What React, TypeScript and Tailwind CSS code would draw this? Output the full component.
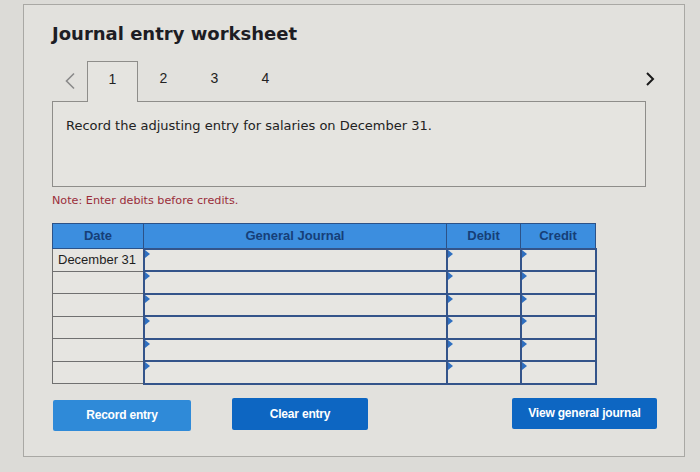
import React from 'react';

const verdana = { fontFamily: '"DejaVu Sans", Verdana, sans-serif' };
const arial = { fontFamily: '"Liberation Sans", Arial, sans-serif' };

const ROWS = ['December 31', '', '', '', '', ''];

function Marker() {
  // little blue arrow in the top-left corner of each input cell
  return (
    <span className="absolute left-0 top-0 h-0 w-0 border-y-[4px] border-l-[5px] border-y-transparent border-l-[#2f6fc0]" />
  );
}

export default function App() {
  return (
    <div className="w-[700px] h-[472px] bg-[#dcdbd7] pt-[4px] pl-[23px] overflow-hidden" style={arial}>
      <div className="w-[662px] h-[453px] border border-[#a9a8a4] bg-[#e2e1dd] px-[28px] pt-[18px]">
        <h1 className="text-[18px] font-bold leading-[22px] text-[#1d1d24]" style={verdana}>
          Journal entry worksheet
        </h1>

        {/* tabs */}
        <div className="mt-[16px] flex h-[40px] w-[605px]">
          <button className="flex w-[35px] items-center justify-center text-[#8a8a8a]">
            <svg width="12" height="18" viewBox="0 0 12 18" fill="none">
              <path d="M10 1.5 2.5 9l7.5 7.5" stroke="currentColor" strokeWidth="1.6" />
            </svg>
          </button>
          <div className="relative z-10 flex h-[41px] w-[51px] items-center justify-center border-x border-t border-[#8e8d8a] bg-[#e5e4e0] pb-[6px] text-[14px] text-[#222]">
            1
          </div>
          {['2', '3', '4'].map((n) => (
            <div key={n} className="flex w-[51px] items-center justify-center pb-[6px] text-[14px] text-[#222]">
              {n}
            </div>
          ))}
          <div className="flex-1" />
          <button className="flex w-[14px] items-center justify-center pb-[4px] text-[#1a1a1a]">
            <svg width="10" height="16" viewBox="0 0 10 16" fill="none">
              <path d="M2 2l6 6-6 6" stroke="currentColor" strokeWidth="2" />
            </svg>
          </button>
        </div>

        <div className="h-[86px] w-[594px] border border-[#8e8d8a] bg-[#e5e4e0] pl-[13px] pt-[15px]">
          <p className="text-[13px] leading-[18px] text-[#222]" style={verdana}>
            Record the adjusting entry for salaries on December 31.
          </p>
        </div>

        <p className="mt-[6px] text-[11.2px] leading-[16px] text-[#9a2d3a]" style={verdana}>
          Note: Enter debits before credits.
        </p>

        {/* journal table */}
        <table className="mt-[14px] w-[543px] table-fixed border-collapse text-[13px]">
          <colgroup>
            <col className="w-[91px]" />
            <col className="w-[303px]" />
            <col className="w-[74px]" />
            <col className="w-[75px]" />
          </colgroup>
          <thead>
            <tr className="h-[25px] bg-[#3c8edf] text-[#163f78]">
              <th className="border border-[#2c5288] font-bold">Date</th>
              <th className="border border-[#2c5288] font-bold">General Journal</th>
              <th className="border border-[#2c5288] font-bold">Debit</th>
              <th className="border border-[#2c5288] font-bold">Credit</th>
            </tr>
          </thead>
          <tbody>
            {ROWS.map((d, i) => (
              <tr key={i} className="h-[22.5px]">
                <td className="border border-[#707070] bg-[#e6e5e1] px-[5px] text-left text-[#1e1e1e]">{d}</td>
                <td className="relative border-2 border-[#34548a] bg-[#e7e6e2] p-0">
                  <Marker />
                </td>
                <td className="relative border-2 border-[#34548a] bg-[#e7e6e2] p-0">
                  <Marker />
                </td>
                <td className="relative border-2 border-[#34548a] bg-[#e7e6e2] p-0">
                  <Marker />
                </td>
              </tr>
            ))}
          </tbody>
        </table>

        {/* actions */}
        <div className="mt-[13px] flex w-[605px] items-start">
          <button className="ml-[1px] mt-[2px] h-[31px] w-[138px] rounded-[2px] bg-[#2f8ad8] text-[12px] font-bold tracking-[-0.2px] text-white">
            Record entry
          </button>
          <button className="ml-[41px] h-[32px] w-[136px] rounded-[2px] bg-[#0d66c2] text-[12px] font-bold tracking-[-0.2px] text-white">
            Clear entry
          </button>
          <button className="ml-auto h-[31px] w-[145px] rounded-[2px] bg-[#0d66c2] text-[12px] font-bold tracking-[-0.2px] text-white">
            View general journal
          </button>
        </div>
      </div>
    </div>
  );
}
